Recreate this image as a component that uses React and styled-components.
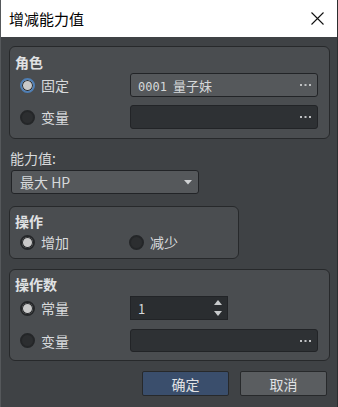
import React from "react";
import styled, { createGlobalStyle } from "styled-components";

const Global = createGlobalStyle`
  html, body { margin: 0; padding: 0; background: #3f4245; }
  body { font-family: "Noto Sans CJK SC", "Noto Sans", sans-serif; }
`;

const Window = styled.div`
  width: 338px;
  height: 407px;
  display: flex;
  flex-direction: column;
  background: #3f4245;
  box-sizing: border-box;
  border-left: 1px solid #55585b;
  border-right: 1px solid #2c2e30;
  overflow: hidden;
`;

const TitleBar = styled.div`
  height: 37px;
  flex: none;
  background: #ffffff;
  display: flex;
  align-items: center;
  justify-content: space-between;
  padding: 0 9px 0 9px;
  margin: 0 -1px;
  font-size: 15px;
  color: #000;
`;

const Close = styled.div`
  width: 36px;
  height: 30px;
  display: flex;
  align-items: center;
  justify-content: center;
  margin-right: -6px;
`;

const Body = styled.div`
  flex: 1;
  display: flex;
  flex-direction: column;
  padding: 9px 8px 0 8px;
  color: #d4d6d8;
  font-size: 14px;
`;

const Group = styled.div`
  box-sizing: border-box;
  width: ${(p) => p.$w}px;
  background: #4a4d50;
  border: 1px solid #27292b;
  border-radius: 6px;
  padding: ${(p) => p.$pad};
  margin-bottom: ${(p) => p.$mb || 0}px;
`;

const GroupLabel = styled.div`
  font-weight: bold;
  font-size: 14px;
  line-height: 16px;
  height: 16px;
  padding-left: 5px;
  color: #e0e2e4;
`;

const Rows = styled.div`
  display: grid;
  grid-template-columns: 110px 188px;
  row-gap: ${(p) => p.$gap}px;
  margin-top: ${(p) => p.$mt}px;
  padding-left: 10px;
`;

const Radio = styled.div`
  display: flex;
  align-items: center;
  gap: 6px;
  height: ${(p) => p.$h || 24}px;
  width: ${(p) => p.$w || "auto"};
  font-size: 14px;
  color: #d8dadc;
`;

const Dot = styled.span`
  box-sizing: border-box;
  width: 15px;
  height: 15px;
  border-radius: 50%;
  flex: none;
  border: ${(p) => (p.$focus ? "2px solid #4f7fb5" : "2px solid #242628")};
  background: ${(p) => (p.$on ? "#c9c9c9" : "#2c2e30")};
  box-shadow: ${(p) => (p.$on ? "inset 0 0 0 1px #2a2c2e" : "none")};
`;

const Field = styled.div`
  box-sizing: border-box;
  height: ${(p) => p.$h || 24}px;
  width: ${(p) => p.$w || 188}px;
  border: 1px solid #222427;
  border-radius: ${(p) => (p.$square ? 0 : 3)}px;
  background: ${(p) => p.$bg};
  display: flex;
  align-items: center;
  justify-content: space-between;
  padding: 0 6px 0 7px;
  font-size: 13px;
  color: #d6d8da;
`;

const Mono = styled.span`
  font-family: "DejaVu Sans Mono", "Liberation Mono", monospace;
  font-size: 12px;
  margin-right: 6px;
`;

const Dots = () => (
  <svg width="11" height="2" viewBox="0 0 11 2">
    <rect x="0" y="0" width="2" height="2" fill="#bfc1c3" />
    <rect x="4.5" y="0" width="2" height="2" fill="#bfc1c3" />
    <rect x="9" y="0" width="2" height="2" fill="#bfc1c3" />
  </svg>
);

const PlainLabel = styled.div`
  font-size: 14px;
  line-height: 16px;
  margin: 11px 0 4px 1px;
  color: #d8dadc;
`;

const Select = styled(Field)`
  margin: 0 0 12px 2px;
  padding-left: 8px;
  padding-right: 6px;
  font-size: 14px;
`;

const Spin = styled.div`
  display: flex;
  flex-direction: column;
  gap: 6px;
  margin-right: -1px;
`;

const RadioLine = styled.div`
  display: flex;
  padding-left: 10px;
  margin-top: 2px;
`;

const Footer = styled.div`
  display: flex;
  justify-content: flex-end;
  gap: 11px;
  margin-top: 10px;
  padding-right: 2px;
`;

const Button = styled.div`
  box-sizing: border-box;
  width: 87px;
  height: 25px;
  display: flex;
  align-items: center;
  justify-content: center;
  border: 1px solid #27292b;
  border-radius: 2px;
  background: ${(p) => (p.$primary ? "#3a4e6c" : "#5a5d60")};
  color: #e0e2e4;
  font-size: 14px;
`;

const Tri = ({ up }) => (
  <svg width="8" height="5" viewBox="0 0 8 5">
    <path d={up ? "M0 5 L4 0 L8 5 Z" : "M0 0 L4 5 L8 0 Z"} fill="#c8cacc" />
  </svg>
);

export default function App() {
  return (
    <>
      <Global />
      <Window>
        <TitleBar>
          <span>增减能力值</span>
          <Close>
            <svg width="13" height="13" viewBox="0 0 13 13">
              <path d="M0.5 0.5 L12.5 12.5 M12.5 0.5 L0.5 12.5" stroke="#111" strokeWidth="1.1" />
            </svg>
          </Close>
        </TitleBar>
        <Body>
          <Group $w={321} $pad="7px 0 9px 0" $mb={0}>
            <GroupLabel>角色</GroupLabel>
            <Rows $gap={8} $mt={3}>
              <Radio>
                <Dot $on $focus />
                固定
              </Radio>
              <Field $bg="#55585b">
                <span>
                  <Mono>0001</Mono>量子妹
                </span>
                <Dots />
              </Field>
              <Radio>
                <Dot />
                变量
              </Radio>
              <Field $bg="#2e3134">
                <span />
                <Dots />
              </Field>
            </Rows>
          </Group>

          <PlainLabel>能力值:</PlainLabel>
          <Select $bg="#55585b" $w={188}>
            <span>最大 HP</span>
            <svg width="8" height="5" viewBox="0 0 8 5">
              <path d="M0 0 L4 4.5 L8 0 Z" fill="#d0d2d4" />
            </svg>
          </Select>

          <Group $w={230} $pad="6px 0 5px 0" $mb={10}>
            <GroupLabel>操作</GroupLabel>
            <RadioLine>
              <Radio $h={22} $w="109px">
                <Dot $on />
                增加
              </Radio>
              <Radio $h={22}>
                <Dot />
                减少
              </Radio>
            </RadioLine>
          </Group>

          <Group $w={321} $pad="6px 0 8px 0">
            <GroupLabel>操作数</GroupLabel>
            <Rows $gap={9} $mt={4}>
              <Radio>
                <Dot $on />
                常量
              </Radio>
              <Field $bg="#2a2d30" $w={98} $square>
                <span>1</span>
                <Spin>
                  <Tri up />
                  <Tri />
                </Spin>
              </Field>
              <Radio $h={23}>
                <Dot />
                变量
              </Radio>
              <Field $bg="#2e3134" $h={23}>
                <span />
                <Dots />
              </Field>
            </Rows>
          </Group>

          <Footer>
            <Button $primary>确定</Button>
            <Button>取消</Button>
          </Footer>
        </Body>
      </Window>
    </>
  );
}
